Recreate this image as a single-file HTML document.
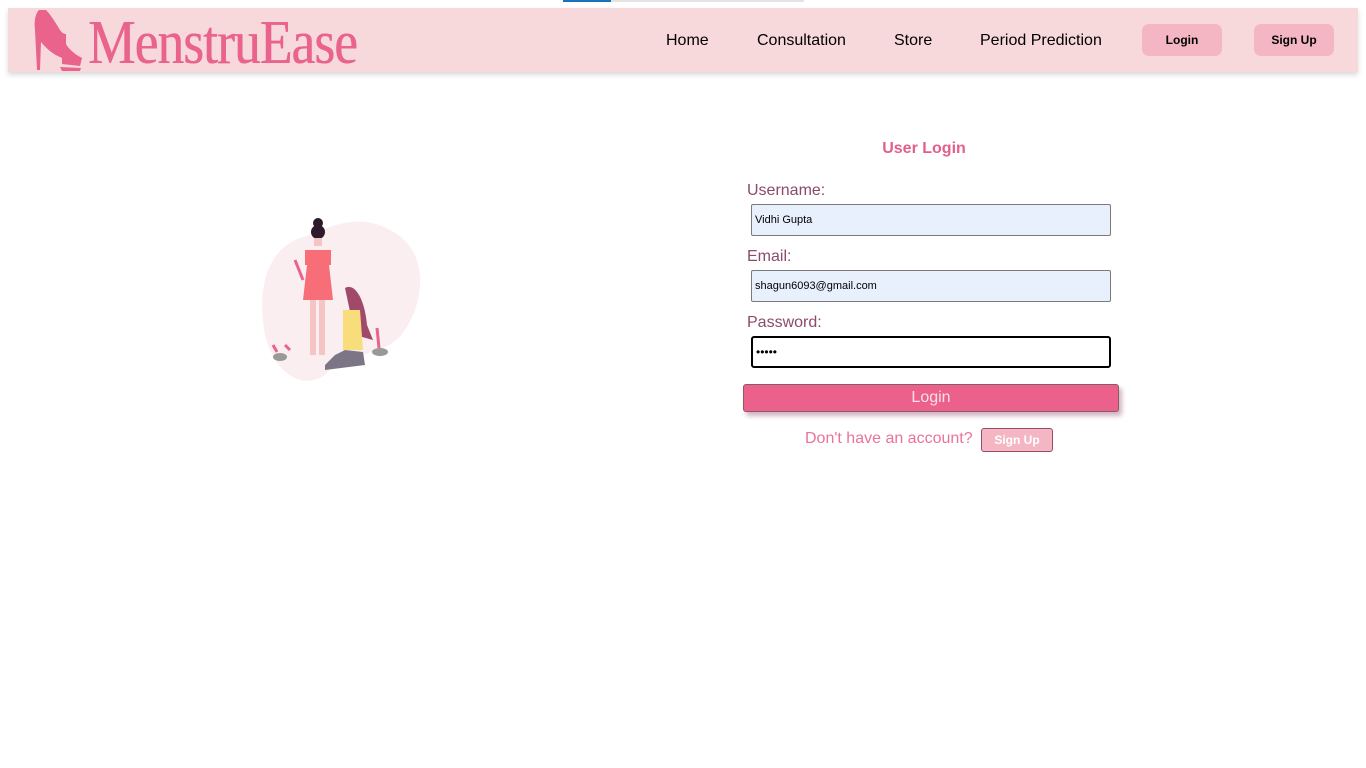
<!DOCTYPE html>
<html><head><meta charset="utf-8"><style>
body{margin:0;background:#fff;font-family:"Liberation Sans",Arial,sans-serif;width:1366px;height:768px;position:relative;overflow:hidden}
.prog{position:absolute;top:0;left:563px;width:241px;height:2px;background:#e3e3e3}
.prog i{position:absolute;left:0;top:0;width:48px;height:2px;background:#1a73b8}
nav{position:absolute;left:8px;top:8px;width:1350px;height:64px;background:#f7d9dc;box-shadow:0 3px 5px rgba(0,0,0,.15)}
.brand{position:absolute;left:80px;top:3px;font-family:"Liberation Serif",serif;font-size:62px;color:#e9638d;transform:scaleX(.86);transform-origin:left top;letter-spacing:-1px;line-height:64px;text-shadow:0.6px 0 0 #e9638d}
.nl{position:absolute;top:24px;font-size:16px;color:#000}
.btn{position:absolute;top:16px;width:80px;height:32px;background:#f4b6c3;border-radius:7px;font-size:12px;font-weight:bold;text-align:center;line-height:32px}
h3{position:absolute;left:0;top:140px;width:1848px;text-align:center;margin:0;font-size:16px;color:#e2608a}
.lab{position:absolute;left:747px;font-size:16px;color:#8a4a6c}
.inp{position:absolute;left:751px;border:1px solid #7a7a7a;border-radius:2px;background:#e8f0fe;font-size:11px;line-height:31px;padding-left:3px;box-sizing:border-box;width:360px;height:32px}
.lb{position:absolute;left:743px;top:384px;width:376px;height:28px;background:#ec618b;border:1px solid #8a5a6a;border-radius:3px;box-sizing:border-box;color:#fbe0e8;font-size:16px;text-align:center;line-height:26px;box-shadow:3px 4px 5px rgba(120,40,80,.35)}
</style></head><body>
<div class="prog"><i></i></div>
<nav>
<svg style="position:absolute;left:24px;top:0" width="52" height="64" viewBox="0 0 52 64">
<path fill="#e9638d" d="M7 2 C3 6 2 14 3 22 L5 62 L8 62 L9 34 C14 40 20 46 30 50 L30 56 L48 58 L50 50 C42 46 36 40 34 36 L34 26 C32 26 30 25 28 22 C22 12 18 6 14 2 Z"/>
<path fill="#e9638d" d="M28 59 L49 60 L48 63 L30 63 Z"/>
</svg>
<div class="brand">MenstruEase</div>
<span class="nl" style="left:658px">Home</span>
<span class="nl" style="left:749px">Consultation</span>
<span class="nl" style="left:886px">Store</span>
<span class="nl" style="left:972px">Period Prediction</span>
<div class="btn" style="left:1134px">Login</div>
<div class="btn" style="left:1246px">Sign Up</div>
</nav>
<svg style="position:absolute;left:255px;top:210px" width="180" height="180" viewBox="0 0 180 180">
<path fill="#fbeef1" d="M40 30 C70 20 100 0 135 20 C175 40 170 90 150 120 C130 150 90 140 70 165 C40 185 10 150 8 110 C5 80 10 45 40 30Z"/>
<circle cx="63" cy="13" r="5" fill="#2e1a2a"/><circle cx="63" cy="22" r="7" fill="#2e1a2a"/>
<rect x="59" y="28" width="8" height="8" fill="#f5c4c4"/>
<path fill="#f76d78" d="M50 40 L76 40 L76 55 L74 55 L78 90 L48 90 L52 55 L50 55Z"/>
<rect x="55" y="90" width="6" height="55" fill="#f5c4c4"/><rect x="64" y="90" width="6" height="55" fill="#f5c4c4"/>
<path fill="#a0496b" d="M90 78 C100 72 110 90 112 115 L118 130 L100 125 Z"/>
<path fill="#f7dd7c" d="M88 100 L105 100 L108 140 L88 140Z"/>
<path fill="#7c7585" d="M70 160 L110 155 L108 142 L90 140 L80 145 L70 155Z"/>
<path fill="#e9638d" d="M40 50 L48 70 M35 140 L30 135 M18 135 L22 142" stroke="#e9638d" stroke-width="3"/>
<ellipse cx="25" cy="147" rx="7" ry="4" fill="#999"/><ellipse cx="125" cy="142" rx="8" ry="4" fill="#999"/>
<path stroke="#e9638d" stroke-width="3" d="M122 118 L124 138"/>
</svg>
<h3>User Login</h3>
<div class="lab" style="top:182px">Username:</div>
<div class="inp" style="top:204px">Vidhi Gupta</div>
<div class="lab" style="top:248px">Email:</div>
<div class="inp" style="top:270px">shagun6093@gmail.com</div>
<div class="lab" style="top:314px">Password:</div>
<div class="inp" style="top:336px;background:#fff;border:2px solid #000;border-radius:3px;font-size:12px;line-height:29px">•••••</div>
<div class="lb">Login</div>
<div style="position:absolute;left:805px;top:430px;font-size:16px;color:#e9739a">Don't have an account?</div>
<div style="position:absolute;left:981px;top:428px;width:72px;height:24px;box-sizing:border-box;border:1px solid #9a4a6a;border-radius:3px;background:#f4b6c3;color:#fff;font-size:12px;font-weight:bold;text-align:center;line-height:22px">Sign Up</div>
</body></html>
